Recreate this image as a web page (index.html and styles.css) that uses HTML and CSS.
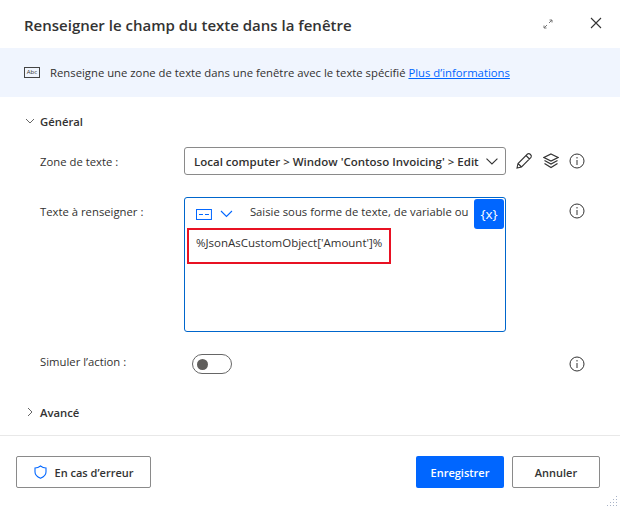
FILE: index.html
```html
<!DOCTYPE html>
<html lang="fr">
<head>
    <meta charset="UTF-8">
    <title>Renseigner le champ du texte dans la fenêtre</title>
    <link rel="stylesheet" href="styles.css">
</head>
<body>
    <div class="dialog">
        <div class="header">
            <h1>Renseigner le champ du texte dans la fenêtre</h1>
            <svg class="expand" width="12" height="12" viewBox="0 0 12 12"><path d="M2 10 5 7M2 7.500V10H4.500M10 2 7 5M7.500 2H10V4.500" fill="none" stroke="#777" stroke-width="1"/></svg>
            <svg class="close" width="12" height="12" viewBox="0 0 12 12"><path d="M1 1 11 11M11 1 1 11" fill="none" stroke="#333" stroke-width="1.100"/></svg>
        </div>

        <div class="banner">
            <span class="abc">Abc</span>
            <p>Renseigne une zone de texte dans une fenêtre avec le texte spécifié <a href="#">Plus d’informations</a></p>
        </div>

        <div class="content">
            <div class="section">
                <svg width="10" height="10" viewBox="0 0 10 10"><path d="M1 3 5 7 9 3" fill="none" stroke="#666"/></svg>
                <span>Général</span>
            </div>

            <div class="row row-select">
                <label>Zone de texte :</label>
                <div class="select">
                    <span>Local computer &gt; Window 'Contoso Invoicing' &gt; Edit</span>
                    <svg width="14" height="14" viewBox="0 0 14 14"><path d="M1.500 4.500 7 10 12.500 4.500" fill="none" stroke="#333" stroke-width="1.100"/></svg>
                </div>
                <div class="tools">
                    <svg width="18" height="18" viewBox="0 0 18 18"><path d="M2 16 3 11.500 12.500 2 Q14 1 15.500 2.500 Q17 4 16 5.500L6.500 15ZM11 3.500 14.500 7M3 11.500 6.500 15" fill="none" stroke="#333" stroke-width="1.100"/></svg>
                    <svg width="16" height="16" viewBox="0 0 16 16"><path d="M8 1 15 4.500 8 8 1 4.500ZM1.500 7.500 8 11 14.500 7.500M1.500 10.500 8 14.500 14.500 10.500" fill="none" stroke="#333" stroke-width="1.200"/></svg>
                    <svg class="info" width="16" height="16" viewBox="0 0 16 16"><circle cx="8" cy="8" r="7" fill="none" stroke="#333"/><path d="M8 7V12M8 4V5.500" stroke="#333"/></svg>
                </div>
            </div>

            <div class="row row-text">
                <label>Texte à renseigner :</label>
                <div class="textarea">
                    <div class="textarea-top">
                        <svg width="16" height="11" viewBox="0 0 16 11"><rect x=".5" y=".5" width="15" height="10" fill="none" stroke="#0066ff"/><path d="M3 5.500H7M9 5.500H13" stroke="#0066ff"/></svg>
                        <svg class="mode-arrow" width="13" height="8" viewBox="0 0 13 8"><path d="M1 1 6.500 6.500 12 1" fill="none" stroke="#0066ff" stroke-width="1.100"/></svg>
                        <span class="hint">Saisie sous forme de texte, de variable ou</span>
                        <button class="var-btn">{x}</button>
                    </div>
                    <div class="value">%JsonAsCustomObject['Amount']%</div>
                </div>
                <div class="tools tools-end">
                    <svg class="info" width="16" height="16" viewBox="0 0 16 16"><circle cx="8" cy="8" r="7" fill="none" stroke="#333"/><path d="M8 7V12M8 4V5.500" stroke="#333"/></svg>
                </div>
            </div>

            <div class="row row-toggle">
                <label>Simuler l’action :</label>
                <div class="toggle-wrap"><div class="toggle"><span></span></div></div>
                <div class="tools tools-end">
                    <svg class="info" width="16" height="16" viewBox="0 0 16 16"><circle cx="8" cy="8" r="7" fill="none" stroke="#333"/><path d="M8 7V12M8 4V5.500" stroke="#333"/></svg>
                </div>
            </div>

            <div class="section section-adv">
                <svg width="10" height="10" viewBox="0 0 10 10"><path d="M3 1 7 5 3 9" fill="none" stroke="#666"/></svg>
                <span>Avancé</span>
            </div>
        </div>

        <div class="footer">
            <button class="btn btn-error">
                <svg width="13" height="14" viewBox="0 0 13 14"><path d="M6.500 1Q9 3 12 3V7Q12 11 6.500 13.200 1 11 1 7V3Q4 3 6.500 1Z" fill="none" stroke="#0066ff" stroke-width="1.100"/></svg>
                En cas d’erreur
            </button>
            <div class="footer-right">
                <button class="btn btn-primary">Enregistrer</button>
                <button class="btn btn-cancel">Annuler</button>
            </div>
        </div>
        <svg class="grip" width="12" height="12" viewBox="0 0 12 12"><path d="M10 1h1v1h-1zM7 4h1v1H7zM10 4h1v1h-1zM4 7h1v1H4zM7 7h1v1H7zM10 7h1v1h-1zM1 10h1v1H1zM4 10h1v1H4zM7 10h1v1H7zM10 10h1v1h-1z" fill="#a9b4c8"/></svg>
    </div>
</body>
</html>
```

FILE: styles.css
```css
*{
    box-sizing: border-box;
}
body{
    margin: 0;
    font-family: 'Open Sans', sans-serif;
    font-size: 11.3px;
    color: #323130;
    background-color: white;
}
.dialog{
    width: 620px;
    height: 509px;
    display: flex;
    flex-direction: column;
    position: relative;
    overflow: hidden;
}
.header{
    height: 48px;
    display: flex;
    align-items: center;
    padding: 2px 18px 0 24px;
}
h1{
    flex: 1;
    margin: 0;
    font-size: 15px;
    font-weight: 600;
    color: #333;
}
.expand{
    margin: -3px 36px 0 0;
}
.close{
    margin-top: -4px;
}
.banner{
    height: 49px;
    display: flex;
    align-items: center;
    gap: 10px;
    padding-left: 24px;
    background: #f0f5fe;
}
.banner p{
    margin: 0;
}
.banner a{
    color: #0066ff;
}
.abc{
    width: 16px;
    height: 11px;
    border: 1px solid #444;
    font-size: 6px;
    line-height: 9px;
    text-align: center;
}
.content{
    height: 339px;
    padding: 17px 0 0 25px;
    border-bottom: 1px solid #e8e8e8;
}
.section{
    display: flex;
    align-items: center;
    gap: 5px;
    height: 14px;
    font-weight: 600;
    color: #333;
}
.section-adv{
    margin-top: 31px;
}
.row{
    display: flex;
    padding-left: 15px;
}
.row label{
    width: 144px;
    flex: none;
}
.row-select{
    margin-top: 19px;
    align-items: center;
}
.select{
    width: 322px;
    height: 28px;
    display: flex;
    align-items: center;
    justify-content: space-between;
    padding: 0 6px 0 9px;
    border: 1px solid #8a8a8a;
    border-radius: 3px;
    font-size: 11.500px;
    font-weight: 600;
}
.select span{
    width: 293px;
    white-space: nowrap;
    overflow: hidden;
}
.tools{
    display: flex;
    align-items: center;
    gap: 10px;
    margin-left: 9px;
}
.tools-end{
    width: 70px;
    margin-left: 9px;
    padding-top: 6px;
    justify-content: flex-end;
    align-self: flex-start;
}
.row-toggle .tools-end{
    padding-top: 2px;
}
.row-text{
    margin-top: 22px;
}
.row-text label{
    padding-top: 7px;
}
.textarea{
    width: 322px;
    height: 135px;
    padding: 1px 1px 0 2px;
    border: 1px solid #0066cc;
    border-radius: 3px;
}
.textarea-top{
    height: 30px;
    display: flex;
    align-items: center;
    padding-left: 9px;
}
.mode-arrow{
    margin-left: 8px;
}
.hint{
    margin: 0 0 5px 17px;
    width: 225px;
    white-space: nowrap;
    overflow: hidden;
}
.var-btn{
    width: 30px;
    height: 30px;
    padding: 0;
    border: none;
    border-radius: 3px;
    background: #0066ff;
    color: white;
    font-family: inherit;
    font-size: 13.500px;
}
.value{
    width: 204px;
    height: 36px;
    padding: 5px 0 0 7px;
    border: 2px solid #e81123;
    margin-top: -1px;
    font-size: 11.500px;
    white-space: nowrap;
}
.row-toggle{
    margin-top: 22px;
    align-items: center;
    height: 20px;
}
.row-toggle label{
    margin-top: -5px;
}
.toggle-wrap{
    width: 322px;
    padding-left: 8px;
}
.toggle{
    width: 40px;
    height: 20px;
    padding: 4px;
    border: 1px solid #666;
    border-radius: 10px;
}
.toggle span{
    display: block;
    width: 11px;
    height: 11px;
    border-radius: 50%;
    background: #605e5c;
}
.footer{
    flex: 1;
    display: flex;
    justify-content: space-between;
    padding: 20px 20px 0 16px;
}
.footer-right{
    display: flex;
    gap: 8px;
}
.btn{
    height: 32px;
    border-radius: 2px;
    font-family: inherit;
    font-size: 11px;
    font-weight: 600;
    color: #333;
    background: white;
    border: 1px solid #8a8a8a;
}
.btn-error{
    width: 135px;
    display: flex;
    align-items: center;
    justify-content: center;
    gap: 8px;
}
.btn-primary{
    width: 88px;
    background: #0066ff;
    border: none;
    color: white;
}
.btn-cancel{
    width: 88px;
}
.grip{
    position: absolute;
    right: 2px;
    bottom: 2px;
}
```
